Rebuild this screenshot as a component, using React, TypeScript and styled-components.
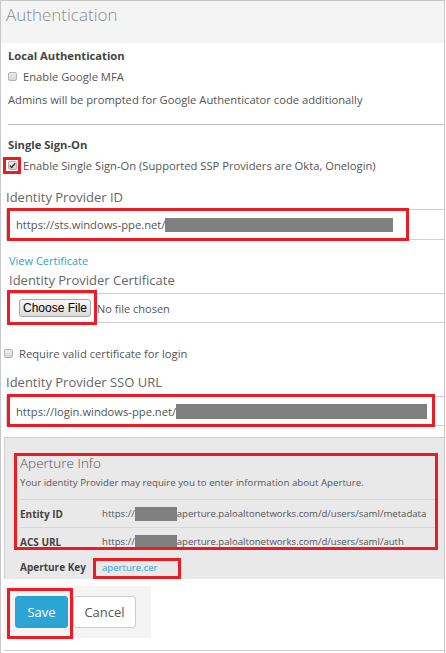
import React from 'react';
import styled, { createGlobalStyle } from 'styled-components';

const GlobalStyle = createGlobalStyle`
  body {
    margin: 0;
    background: #fff;
    font-family: 'Open Sans', 'Liberation Sans', sans-serif;
    color: #555;
  }
`;

const Frame = styled.div`
  width: 445px;
  height: 653px;
  box-sizing: border-box;
  border: 1px solid #c8c8c8;
  border-bottom: none;
`;

const Header = styled.div`
  height: 42px;
  box-sizing: border-box;
  background: #f4f4f4;
  padding: 1px 0 0 5px;
  font-size: 17px;
  font-weight: 300;
  line-height: 26px;
  color: #8c8c8c;
`;

const Section = styled.div`
  padding-left: 7px;
`;

const SectionTitle = styled.div<{ $mt: number }>`
  margin-top: ${(p) => p.$mt}px;
  font-size: 11.2px;
  font-weight: 700;
  line-height: 20px;
  color: #444;
`;

const CheckRow = styled.label<{ $indent?: number; $mt?: number }>`
  position: relative;
  display: flex;
  align-items: center;
  gap: 6px;
  height: 20px;
  margin-left: ${(p) => p.$indent ?? 0}px;
  margin-top: ${(p) => p.$mt ?? 0}px;
  font-size: 11.2px;
  color: #555;
`;

const Box = styled.span`
  display: inline-flex;
  align-items: center;
  justify-content: center;
  width: 9px;
  height: 9px;
  box-sizing: border-box;
  border: 1px solid #b4b4b4;
  border-radius: 2px;
  background: linear-gradient(#ececec, #d6d6d6);
`;

const Help = styled.div`
  margin-top: 4px;
  font-size: 11.2px;
  line-height: 20px;
  color: #555;
`;

const Divider = styled.div`
  margin-top: 14px;
  border-top: 1px solid #bdbdbd;
`;

const FieldLabel = styled.div<{ $mt: number; $indent?: number }>`
  margin-top: ${(p) => p.$mt}px;
  margin-left: ${(p) => p.$indent ?? 5}px;
  font-size: 13px;
  line-height: 22px;
  color: #666;
`;

const TextInput = styled.div<{ $mt: number; $h: number }>`
  position: relative;
  display: flex;
  align-items: center;
  margin: ${(p) => p.$mt}px 0 0 5px;
  height: ${(p) => p.$h}px;
  box-sizing: border-box;
  border: 1px solid #cfcfcf;
  border-right: none;
  padding-left: 9px;
  font-size: 11.2px;
  color: #555;
`;

const Redact = styled.span<{ $w: number; $h: number }>`
  display: inline-block;
  flex: none;
  width: ${(p) => p.$w}px;
  height: ${(p) => p.$h}px;
  background: #808080;
`;

// red annotation frame drawn over the screenshot
const Mark = styled.span<{ $l: number; $t: number; $w: number; $h: number }>`
  position: absolute;
  left: ${(p) => p.$l}px;
  top: ${(p) => p.$t}px;
  width: ${(p) => p.$w}px;
  height: ${(p) => p.$h}px;
  box-sizing: border-box;
  border: 3px solid #ec1c24;
  pointer-events: none;
`;

const Link = styled.a`
  color: #2ba3d6;
  text-decoration: none;
  cursor: pointer;
`;

const CertLink = styled.div`
  margin: 13px 0 0 8px;
  font-size: 11px;
  line-height: 16px;
`;

const FileRow = styled.div`
  position: relative;
  display: flex;
  align-items: center;
  margin: 2px 0 0 7px;
  height: 30px;
  box-sizing: border-box;
  border-top: 1px solid #cfcfcf;
  border-bottom: 1px solid #cfcfcf;
`;

const FileButton = styled.button`
  margin-left: 11px;
  width: 72px;
  height: 18px;
  padding: 0;
  border: 1px solid #a6a6a6;
  border-radius: 3px;
  background: linear-gradient(#f7f7f7, #dcdcdc);
  font-family: 'Liberation Sans', Arial, sans-serif;
  font-size: 12px;
  color: #000;
`;

const FileName = styled.span`
  margin-left: 6px;
  font-size: 11px;
  color: #555;
`;

const Panel = styled.div`
  position: relative;
  margin: 11px 0 0 3px;
  border-top: 1px solid #cdcdcd;
  border-left: 1px solid #cdcdcd;
  background: #e9e9e9;
  padding: 15px 6px 0 15px;
`;

const PanelTitle = styled.div`
  font-size: 13.5px;
  font-weight: 300;
  line-height: 20px;
  color: #555;
`;

const PanelDesc = styled.div`
  margin-top: 3px;
  font-size: 9.7px;
  line-height: 14px;
  color: #555;
`;

const InfoTable = styled.div`
  margin-top: 9px;
`;

const InfoRow = styled.div<{ $h: number; $line?: boolean }>`
  position: relative;
  display: grid;
  grid-template-columns: 82px 1fr;
  align-items: center;
  height: ${(p) => p.$h}px;
  border-top: ${(p) => (p.$line ? '1px solid #d9d9d9' : 'none')};
  font-size: 10px;
  color: #555;
`;

const InfoKey = styled.span`
  font-weight: 700;
  color: #444;
`;

const InfoValue = styled.span`
  display: flex;
  align-items: center;
  white-space: nowrap;
  font-size: 9.6px;
`;

const ActionBar = styled.div`
  position: relative;
  display: flex;
  gap: 5px;
  width: 147px;
  box-sizing: border-box;
  margin: 7px 0 0 3px;
  padding: 10px 0 10px 11px;
  background: #f4f4f4;
`;

const Button = styled.button<{ $primary?: boolean; $w: number }>`
  width: ${(p) => p.$w}px;
  height: 32px;
  padding: 0;
  border-radius: 3px;
  border: 1px solid ${(p) => (p.$primary ? '#2aa3d2' : '#cccccc')};
  background: ${(p) => (p.$primary ? '#2ba5d4' : '#ffffff')};
  color: ${(p) => (p.$primary ? '#ffffff' : '#555')};
  font-family: 'Open Sans', 'Liberation Sans', sans-serif;
  font-size: 13px;
`;

const Footer = styled.div`
  margin-left: 3px;
  height: 12px;
  border-bottom: 1px solid #cdcdcd;
`;

function Check() {
  return (
    <svg width="7" height="7" viewBox="0 0 7 7">
      <path d="M0.8 3.6 L2.7 5.5 L6.2 1.2" fill="none" stroke="#333" strokeWidth="1.4" />
    </svg>
  );
}

export default function App() {
  return (
    <>
      <GlobalStyle />
      <Frame>
        <Header>Authentication</Header>

        <Section>
          <SectionTitle $mt={3}>Local Authentication</SectionTitle>
          <CheckRow>
            <Box />
            Enable Google MFA
          </CheckRow>
          <Help>Admins will be prompted for Google Authenticator code additionally</Help>
          <Divider />

          <SectionTitle $mt={10}>Single Sign-On</SectionTitle>
          <CheckRow>
            <Box>
              <Check />
            </Box>
            Enable Single Sign-On (Supported SSP Providers are Okta, Onelogin)
            <Mark $l={-5} $t={2} $w={18} $h={17} />
          </CheckRow>
        </Section>

        <FieldLabel $mt={11}>Identity Provider ID</FieldLabel>
        <TextInput $mt={1} $h={31}>
          https://sts.windows-ppe.net/
          <Redact $w={228} $h={14} />
          <Mark $l={0} $t={-2} $w={402} $h={33} />
        </TextInput>

        <CertLink>
          <Link>View Certificate</Link>
        </CertLink>
        <FieldLabel $mt={0} $indent={8}>
          Identity Provider Certificate
        </FieldLabel>
        <FileRow>
          <FileButton>Choose File</FileButton>
          <FileName>No file chosen</FileName>
          <Mark $l={-1} $t={-4} $w={90} $h={35} />
        </FileRow>

        <CheckRow $indent={3} $mt={20}>
          <Box />
          Require valid certificate for login
        </CheckRow>

        <FieldLabel $mt={8}>Identity Provider SSO URL</FieldLabel>
        <TextInput $mt={3} $h={30}>
          https://login.windows-ppe.net/
          <Redact $w={251} $h={15} />
          <Mark $l={0} $t={-3} $w={428} $h={33} />
        </TextInput>

        <Panel>
          <PanelTitle>Aperture Info</PanelTitle>
          <PanelDesc>Your identity Provider may require you to enter information about Aperture.</PanelDesc>
          <InfoTable>
            <InfoRow $h={27} $line>
              <InfoKey>Entity ID</InfoKey>
              <InfoValue>
                https://
                <Redact $w={42} $h={14} />
                aperture.paloaltonetworks.com/d/users/saml/metadata
              </InfoValue>
            </InfoRow>
            <InfoRow $h={27} $line>
              <InfoKey>ACS URL</InfoKey>
              <InfoValue>
                https://
                <Redact $w={42} $h={14} />
                aperture.paloaltonetworks.com/d/users/saml/auth
              </InfoValue>
            </InfoRow>
            <InfoRow $h={24}>
              <InfoKey>Aperture Key</InfoKey>
              <InfoValue>
                <Link>aperture.cer</Link>
              </InfoValue>
              <Mark $l={73} $t={3} $w={88} $h={21} />
            </InfoRow>
          </InfoTable>
          <Mark $l={9} $t={15} $w={424} $h={97} />
        </Panel>

        <ActionBar>
          <Button $primary $w={53}>Save</Button>
          <Button $w={63}>Cancel</Button>
          <Mark $l={3} $t={2} $w={66} $h={51} />
        </ActionBar>
        <Footer />
      </Frame>
    </>
  );
}
